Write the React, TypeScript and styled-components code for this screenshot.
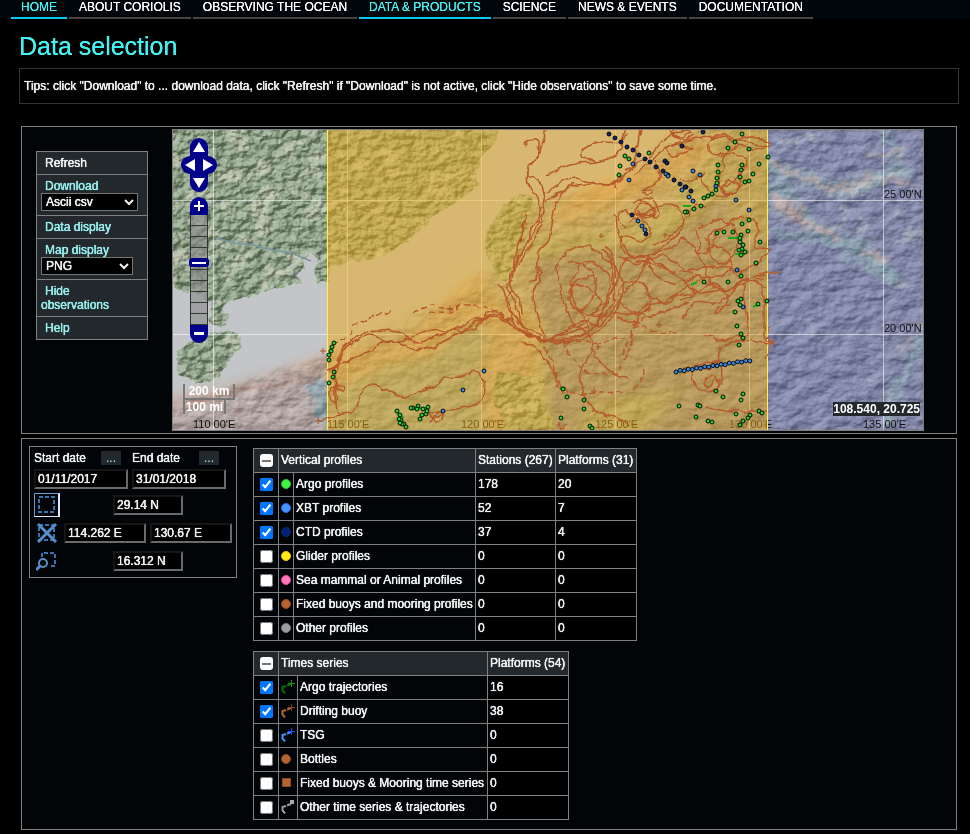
import React, { useEffect, useRef, useState } from "react";
import styled, { createGlobalStyle, css } from "styled-components";

const GlobalStyle = createGlobalStyle`
  * { box-sizing: border-box; }
  body {
    margin: 0;
    background: #000;
    color: #f0f0f0;
    font-family: "Liberation Sans", Arial, sans-serif;
    font-size: 12px;
    line-height: 14px;
  }
`;

const heavy = css`
  text-shadow: 0 0 0 currentColor, 0 0 1px currentColor;
`;

const Page = styled.div`
  padding-bottom: 4px;
`;

const Nav = styled.nav`
  display: flex;
  gap: 2px;
  height: 19px;
  padding-left: 11px;
  background: #01060a;
`;

const NavLink = styled.a<{ $active?: boolean }>`
  padding: 0 10px;
  border-bottom: 2px solid ${(p) => (p.$active ? "#00ccf5" : "#454545")};
  color: ${(p) => (p.$active ? "#41f4f4" : "#fff")};
  text-decoration: none;
  text-shadow: 0 0 0 currentColor;
  white-space: nowrap;
  line-height: 14px;
`;

const Title = styled.h1`
  margin: 12px 19px 6px;
  color: #41f4f4;
  font-size: 25px;
  font-weight: 400;
  line-height: 31px;
  text-shadow: 0 0 0 currentColor;
`;

const Tips = styled.p`
  ${heavy}
  margin: 0 11px 22px 19px;
  padding: 10px 4px;
  border: 1px solid #333;
  line-height: 14px;
`;

const Panel = styled.section`
  display: flex;
  align-items: flex-start;
  margin: 0 13px 4px 21px;
  border: 1px solid #808080;
  background: #010508;
`;

const MapPanel = styled(Panel)`
  gap: 24px;
  padding: 2px 32px 2px 14px;
`;

const DataPanel = styled(Panel)`
  gap: 16px;
  padding: 7px 7px 9px;
  margin-bottom: 0;
`;

const Menu = styled.ul`
  ${heavy}
  flex: 0 0 112px;
  margin: 22px 0 0;
  padding: 0;
  list-style: none;
  border: 1px solid #808080;
  background: #23282c;
`;

const MenuItem = styled.li`
  padding: 4px;
  & + & { border-top: 1px solid #808080; }
`;

const MenuLink = styled.a<{ $plain?: boolean }>`
  display: block;
  text-indent: 4px;
  text-decoration: none;
  color: ${(p) => (p.$plain ? "#f0f0f0" : "#98ecec")};
`;

const HideLink = styled(MenuLink)`
  width: 80px;
`;

const MenuSelect = styled.select<{ $wide?: boolean }>`
  ${heavy}
  display: block;
  width: ${(p) => (p.$wide ? 97 : 92)}px;
  height: 18px;
  padding: 0;
  border: 1px solid #767676;
  background: #000;
  color: #f0f0f0;
  font: 12px "Liberation Sans", Arial, sans-serif;
`;

const MapFrame = styled.div`
  position: relative;
  flex: 1;
  min-width: 0;
  height: 302px;
  border: 1px solid #808080;
  overflow: hidden;
`;

const Chart = styled.svg`
  display: block;
  width: 100%;
  height: 100%;
`;

const Blend = styled.rect`
  mix-blend-mode: hard-light;
`;

const Controls = styled.div`
  position: absolute;
  top: 8px;
  left: 8px;
  width: 36px;
  display: flex;
  flex-direction: column;
  align-items: center;
`;

const Pad = styled.div`
  display: grid;
  grid-template: 18px 18px 18px / 9px 9px 9px 9px;
  margin-bottom: 5px;
`;

const RoundButton = styled.button<{ $area?: string; $radius: string }>`
  grid-area: ${(p) => p.$area ?? "auto"};
  width: 18px;
  height: 18px;
  padding: 0;
  border: 0;
  border-radius: ${(p) => p.$radius};
  background: #00008b;
  svg { display: block; }
`;

const ZoomRail = styled.div`
  display: flex;
  justify-content: center;
  width: 18px;
  height: 110px;
  border: 1px solid #333;
  border-width: 0 1px;
  background: repeating-linear-gradient(#88888899 0 10px, #303a30 10px 11px);
`;

const ZoomSlider = styled.input`
  flex: 0 0 20px;
  appearance: none;
  writing-mode: vertical-lr;
  direction: rtl;
  width: 20px;
  height: 110px;
  margin: 0;
  background: none;
  &::-webkit-slider-thumb {
    appearance: none;
    width: 20px;
    height: 9px;
    border: 0;
    border-radius: 3px;
    background: linear-gradient(#fff, #fff) center / 14px 2px no-repeat #00008b;
  }
`;

const Scale = styled.div`
  position: absolute;
  left: 10px;
  bottom: 16px;
  color: #fff;
  font-weight: 700;
  text-align: center;
`;

const ScaleTop = styled.div`
  width: 52px;
  height: 16px;
  border: solid #777;
  border-width: 0 2px 2px;
`;

const ScaleBottom = styled.div`
  width: 43px;
  height: 14px;
  border: solid #777;
  border-width: 0 2px;
`;

const Readout = styled.output`
  position: absolute;
  right: 3px;
  bottom: 14px;
  background: #23282c;
  color: #fff;
  font-weight: 700;
`;

const Extent = styled.form`
  ${heavy}
  flex: 0 0 208px;
  display: grid;
  gap: 4px;
  padding: 4px;
  border: 1px solid #808080;
`;

const Dates = styled.div`
  display: grid;
  grid-template-columns: 94px 94px;
  gap: 4px;
`;

const DateHead = styled.div`
  display: flex;
  justify-content: space-between;
  padding-right: 7px;
`;

const DotsButton = styled.button`
  width: 20px;
  height: 14px;
  padding: 0;
  border: 0;
  background: #23282c;
  color: #98ecec;
  font: 12px/10px "Liberation Sans", Arial, sans-serif;
`;

const Field = styled.input`
  ${heavy}
  min-width: 0;
  width: 100%;
  height: 20px;
  padding: 0 2px;
  border: 2px solid;
  border-color: #161616 #6a6a6a #6a6a6a #161616;
  background: #000;
  color: #f0f0f0;
  font: 12px "Liberation Sans", Arial, sans-serif;
`;

const ExtentRow = styled.div<{ $single?: boolean }>`
  display: grid;
  grid-template-columns: 26px ${(p) => (p.$single ? "70px" : "82px 82px")};
  column-gap: ${(p) => (p.$single ? 53 : 4)}px;
  align-items: center;
  height: 24px;
`;

const ToolButton = styled.button<{ $on?: boolean }>`
  display: grid;
  place-items: center;
  width: 26px;
  height: 24px;
  padding: 0;
  border: 1px solid ${(p) => (p.$on ? "#6d9bd0" : "transparent")};
  ${(p) => p.$on && "border-right: 2px solid #dde8ff; border-bottom-color: #dde8ff;"}
  background: none;
`;

const Tables = styled.div`
  ${heavy}
  display: flex;
  flex-direction: column;
  align-items: flex-start;
  gap: 10px;
  padding-top: 2px;
`;

const Table = styled.table`
  border-collapse: collapse;
  line-height: 14px;
  text-align: left;
`;

const Cell = styled.td<{ $w?: number; $dark?: boolean }>`
  width: ${(p) => (p.$w ? p.$w + "px" : "auto")};
  height: 24px;
  padding: 0 1px 2px 2px;
  border: 1px solid #808080;
  background: ${(p) => (p.$dark ? "#000" : "transparent")};
  white-space: nowrap;
  svg { display: block; }
`;

const HeadRow = styled.tr`
  background: #23282c;
`;

const HeadCell = styled(Cell).attrs({ as: "th" })`
  font-weight: 400;
  background: transparent;
`;

const Tick = styled.input`
  display: block;
  width: 13px;
  height: 13px;
  margin: 2px auto 0;
`;

const MixedTick = styled(Tick)`
  appearance: none;
  border-radius: 3px;
  background: linear-gradient(#777, #777) center / 9px 2px no-repeat #fff;
`;

type Pt = [number, number];
const points = (s: string): Pt[] =>
  s.trim().split(/\s+/).map((p) => p.split(",").map(Number) as Pt);

const smooth = (s: string) => {
  const p = points(s);
  let d = `M${p[0][0]} ${p[0][1]}`;
  for (let i = 0; i < p.length - 1; i++) {
    const a = p[i - 1] ?? p[i];
    const b = p[i];
    const c = p[i + 1];
    const e = p[i + 2] ?? c;
    d += `C${b[0] + (c[0] - a[0]) / 6} ${b[1] + (c[1] - a[1]) / 6} ${c[0] - (e[0] - b[0]) / 6} ${c[1] - (e[1] - b[1]) / 6} ${c[0]} ${c[1]}`;
  }
  return d;
};

const LAND =
  "M172 129H498L493 145 480 158 475 175 478 185 467 195 450 205 430 218 423 228 403 242 390 252 370 260 350 260 330 268 327 280 318 282 314 270 320 262 312 252 306 256 303 268 296 276 302 282 290 285 275 288 262 292 248 296 232 301 224 305 222 310 228 316 226 325 216 327 209 322 211 306 206 297 196 292 185 292 172 284Z" +
  "M520 194L530 195 534 203 530 213 527 235 518 255 510 272 506 284 498 276 492 263 485 248 486 236 495 218 507 203Z" +
  "M233 332L241 335 240 346 232 357 220 374 208 382 198 383 187 377 178 375 177 352 187 345 200 337 213 333Z" +
  "M498 372L517 373 530 378 543 375 545 383 538 397 548 410 554 431H502L500 413 493 403 493 390Z";

const TRACKS = [
  "327,370 337,365 343,352 352,343 370,335 383,340 397,342 415,349 430,348 450,338 465,330 480,320 495,315 508,320 520,332 540,341",
  "338,415 335,395 337,368 341,352 355,338 376,331 392,330 408,338 418,343 435,336 462,327 472,320 500,318 522,332 545,342 570,343",
  "330,370 350,360 370,352 383,342 405,341 430,331 470,330 490,312 510,320",
  "318,421 338,415 355,409 362,390 370,386 385,389 403,397 420,391 430,388 445,378 460,377 475,371 484,383 483,398 475,405 455,409 440,415 430,422",
  "333,387 342,386 341,390 331,388 331,401 337,402 336,392 331,392",
  "432,420 438,412 444,418 436,422 430,414 440,412 444,420",
  "546,130 540,150 530,165 527,175 536,178 542,190 545,210 540,225 535,240 525,255 515,270 510,285 520,300 522,315",
  "525,144 532,139 539,142 536,157 528,168 527,183 536,193 540,212 533,235 518,258 514,272",
  "547,177 560,168 575,163 595,162 610,158 620,150 625,135 627,129",
  "595,162 581,155 585,147 600,143 620,143 628,134",
  "542,192 552,190 560,182 575,178 590,182 615,183 630,170 636,155 640,129",
  "540,211 550,198 565,190 573,183",
  "616,184 590,184 572,186 560,197 554,212 551,230 548,242 538,252 538,275 530,283",
  "513,282 515,267 521,255 529,240 532,225 544,215",
  "525,213 523,230 518,245 515,260 511,275 507,290 515,300 520,320 530,335 545,340",
  "500,284 504,296 511,310 513,321 528,335 547,340 570,338 593,330",
  "512,290 506,304 515,317 525,327 545,338",
  "540,265 540,280 533,297 538,315 545,335 565,341",
  "558,282 558,265 567,252 580,246 592,248 610,262 620,276 624,292 613,315 600,330 580,340 550,343",
  "570,283 580,267 593,263 610,278 606,300 599,320 580,329 552,338",
  "622,284 640,282 648,290 650,302 635,314 612,315 590,317",
  "602,249 610,257 613,278 614,300 601,320",
  "572,283 572,300 585,322 592,340 597,358 613,373 628,379",
  "559,283 564,301 573,322 592,337",
  "542,343 565,331 585,322 604,302 617,282 624,261 646,256 667,270",
  "545,342 566,341 591,330 606,304 615,282 612,255 605,245",
  "548,343 581,321 600,325 622,296 637,279 650,256",
  "593,347 580,377 585,397 597,412 617,418 630,428",
  "522,340 540,352 555,375 558,385 563,392",
  "615,213 617,228 629,253 645,258 655,275 675,285",
  "626,229 619,222 619,214 625,211 640,217 650,230 642,242 625,235 620,245 630,255 647,256 665,245 680,232 683,215 670,205 650,210 630,222",
  "640,200 649,204 653,213 645,218 635,211 641,204 653,207 654,213 640,216 638,209",
  "633,202 648,198 657,207 658,216 647,215 635,215",
  "626,175 618,180 616,189",
  "626,170 638,163 652,155 661,143 675,134 690,129",
  "634,174 648,165 663,150 680,143 697,138 718,135 739,140 767,147",
  "656,160 660,178 649,187 641,190",
  "640,191 653,190 648,195 641,192",
  "654,244 669,238 681,225 694,208 707,206",
  "690,150 674,155 666,150 677,145 693,150",
  "670,130 680,137 690,132 679,129 673,134 684,140 693,135",
  "717,134 709,144 712,153 725,153 737,145 725,138 710,137",
  "735,140 753,137 772,145 750,149 733,142",
  "719,157 733,153 747,160 745,170 733,182 721,189 731,194 743,184",
  "723,155 722,170 719,185 728,193 739,187 730,180 722,188",
  "680,178 690,181 705,173 702,184 713,193 723,196 739,187 738,169",
  "695,230 700,245 699,255 710,248 722,228 739,217 747,217",
  "698,229 708,223 720,219 734,228 736,250 723,264 711,255 709,237 723,227",
  "704,238 715,247 725,250 733,265 721,276 708,277 695,274",
  "680,271 705,268 728,267 740,278 760,276 778,271",
  "683,285 699,275 710,285 730,290 745,280 768,287",
  "680,300 697,293 712,284 728,290 744,280 764,284",
  "682,320 695,302 715,303 730,295 740,285 763,278",
  "682,281 700,293 722,290 728,303 716,313 717,308 730,306",
  "744,283 745,305 748,332 740,337 716,340 713,336 703,335",
  "763,284 763,305 764,337 773,342",
  "748,215 758,228 754,246 768,250 757,263 739,272",
  "721,348 730,343 746,340 761,343 774,344 766,341",
  "721,346 717,360 708,370 697,366 692,375 698,389 713,391 719,380 713,374 704,381 709,388 717,377",
  "712,361 720,361 721,382 711,391",
  "703,407 718,410 735,411 751,411 767,412",
  "681,370 698,365 718,361",
  "618,318 636,322 642,310 660,302 680,295 700,292",
  "642,284 655,298 670,302 684,288 700,280",
  "630,310 650,316 669,310 687,302",
  "620,258 640,263 660,256 676,264 693,274",
  "654,254 670,248 682,239 695,250 704,267 712,285",
  "623,283 619,293 628,310 640,315 652,305 646,292",
  "570,262 588,268 596,285 590,303 578,310 569,300 575,282 592,275",
  "568,292 578,285 594,292 601,304 591,315 576,310",
  "635,260 657,265 677,275 694,293",
  "560,423 561,430 567,425",
];

const DASHED = [
  "333,345 350,333 355,326 372,317 390,312",
  "413,313 430,306 450,309 465,305 485,307 500,313 512,320",
  "430,312 447,313 460,307",
  "563,343 577,363 587,373 600,373 617,373",
  "620,370 630,347 633,327 650,330 677,333",
  "623,355 634,330",
  "633,325 650,316 670,309 690,302",
  "645,368 643,377 630,390 597,393 573,393 558,380 551,358 543,347",
  "540,340 565,342 600,342 632,336",
  "768,327 769,350 766,357",
];

const GREEN =
  "625,156 629,159 620,166 619,175 649,153 742,134 735,142 728,148 749,149 768,157 759,164 742,165 741,170 740,177 753,174 749,181 745,182 718,165 718,172 717,178 717,183 716,190 712,194 708,196 704,198 701,206 694,209 687,212 685,212 749,220 742,224 748,231 733,232 717,233 724,232 741,235 740,242 742,249 745,252 741,255 740,238 743,245 739,250 760,242 756,263 741,276 704,282 728,282 741,299 738,301 740,305 735,312 758,304 767,301 737,326 741,334 743,338 739,345 334,343 332,347 331,351 329,355 329,360 334,372 333,377 329,383 698,405 700,406 716,391 723,397 743,394 741,400 696,417 708,421 712,422 759,411 762,413 750,415 748,418 743,421 740,425 563,389 567,397 584,400 584,409 561,418 590,426 592,428 679,406 397,411 400,415 401,420 404,424 406,427 399,419 402,424 413,408 418,406 423,409 428,407 422,415 420,419 426,414 411,408 417,409 427,411 400,423 736,414";
const BLUE =
  "633,164 629,180 642,226 645,230 638,221 682,190 693,171 700,175 689,197 716,186 736,200 749,210 737,270 743,307 484,371 463,390 443,411 666,174 668,176 693,201";
const NAVY =
  "609,134 615,138 621,142 627,147 633,150 639,155 645,159 650,162 656,167 663,171 668,175 674,180 680,184 686,187 665,161 667,163 682,146 703,132 632,215 646,234 691,191 685,187";

const shots = points(GREEN);
const blueDots = points(BLUE).concat(
  Array.from({ length: 19 }, (_, i) => [676 + i * 4.1, 372 - (i * 11) / 18 - (i % 2)] as Pt)
);
const navyDots = points(NAVY);

const Dots = ({ list, color }: { list: Pt[]; color: string }) => (
  <g fill={color} stroke="#050b05">
    {list.map(([x, y], i) => (
      <circle key={i} cx={x} cy={y} r="2" />
    ))}
  </g>
);

const Lighting = ({ id, freq, seed, depth, gain }: { id: string; freq: string; seed: number; depth: number; gain: number }) => (
  <filter id={id} x="0" y="0" width="100%" height="100%" colorInterpolationFilters="sRGB">
    <feTurbulence type="fractalNoise" baseFrequency={freq} numOctaves="4" seed={seed} />
    <feColorMatrix values="0 0 0 0 0 0 0 0 0 0 0 0 0 0 0 1 0 0 0 0" />
    <feDiffuseLighting surfaceScale={depth} diffuseConstant={gain} lightingColor="#fff">
      <feDistantLight azimuth="225" elevation="45" />
    </feDiffuseLighting>
  </filter>
);

const MapDrawing = () => (
  <Chart viewBox="173 130 750 300" preserveAspectRatio="xMidYMid slice" role="img" aria-label="Observation map">
    <defs>
      <Lighting id="relief" freq="0.1 0.13" seed={8} depth={6} gain={0.84} />
      <Lighting id="seabed" freq="0.05 0.08" seed={21} depth={4} gain={0.78} />
      <filter id="soft" x="-20%" y="-20%" width="140%" height="140%">
        <feGaussianBlur stdDeviation="6" />
      </filter>
      <filter id="ridge" x="-20%" y="-20%" width="140%" height="140%">
        <feTurbulence type="fractalNoise" baseFrequency="0.09" numOctaves="4" seed="3" result="n" />
        <feGaussianBlur in="SourceGraphic" stdDeviation="2" />
        <feDisplacementMap in2="n" scale="18" xChannelSelector="R" yChannelSelector="G" />
      </filter>
      <filter id="patches" x="0" y="0" width="100%" height="100%">
        <feTurbulence type="fractalNoise" baseFrequency="0.04 0.06" numOctaves="4" seed="15" />
        <feColorMatrix values="0 0 0 0 0.75 0 0 0 0 0.72 0 0 0 0 0.58 5 0 0 0 -2.5" />
      </filter>
      <filter id="coast" x="-5%" y="-5%" width="110%" height="110%">
        <feTurbulence type="fractalNoise" baseFrequency="0.13" numOctaves="3" seed="6" />
        <feDisplacementMap in="SourceGraphic" scale="9" xChannelSelector="R" yChannelSelector="G" />
      </filter>
      <filter id="drift" x="-5%" y="-5%" width="110%" height="110%">
        <feTurbulence type="fractalNoise" baseFrequency="0.1" numOctaves="2" seed="12" />
        <feDisplacementMap in="SourceGraphic" scale="7" xChannelSelector="R" yChannelSelector="G" />
      </filter>
      <clipPath id="land"><path d={LAND} /></clipPath>
      <mask id="deepArea" maskUnits="userSpaceOnUse" x="172" y="129" width="752" height="302">
        <path d="M150 410L260 378 335 355 450 300 500 262 530 200 620 190 690 120H950V450H150Z" fill="#fff" filter="url(#soft)" />
      </mask>
    </defs>

    <rect x="172" y="129" width="752" height="302" fill="#c3c5c8" />
    <g filter="url(#soft)">
      <path d="M165 400L240 385 300 364 340 350 400 342 445 300 480 272 500 300 545 320V440H165Z" fill="#dab49a" />
      <path d="M165 408L230 392 290 372 330 380V440H165Z" fill="#ccb4b0" />
      <path d="M330 440L338 388 390 364 432 356 470 322 492 332 482 362 486 440Z" fill="#92bab8" />
      <path d="M535 440L540 300 522 250 545 234 610 232 650 225 705 168 760 120H940V440Z" fill="#a2bca0" />
      <path d="M552 440L545 330 528 262 580 250 655 246 690 220 720 200 780 110H940V440Z" fill="#7a82b8" />
      <path d="M552 212L580 192 650 168 700 140 715 150 670 180 610 207 560 222Z" fill="#dca88a" />
      <path d="M715 129H768V240L735 235Z" fill="#98a69c" />
      <path d="M590 400L680 390 640 440H570Z" fill="#9bb0a0" />
    </g>
    <rect x="768" y="129" width="156" height="302" fill="#7b84be" />
    <g filter="url(#ridge)" fill="none" strokeLinecap="round">
      <g stroke="#86b2c6" strokeOpacity="0.85">
        <path d="M768 166L800 176 835 190 870 182 900 168" strokeWidth="14" />
        <path d="M775 190L790 200" strokeWidth="22" />
        <path d="M775 208L805 215 820 232 860 246 895 280" strokeWidth="13" />
        <path d="M773 232L820 238 865 264 890 278" strokeWidth="5" />
        <path d="M885 132L900 155 912 185M870 156L903 152" strokeWidth="6" />
        <path d="M926 325L918 345 906 375 895 390 888 425" strokeWidth="8" />
        <path d="M313 388L327 396 324 415" strokeWidth="16" />
      </g>
      <g stroke="#ccb0b0">
        <path d="M772 163L800 176 838 190 872 178" strokeWidth="5" />
        <path d="M780 203L797 216" strokeWidth="15" />
        <path d="M800 220L835 236M868 253L884 260" strokeWidth="6" />
        <path d="M870 157L902 152M885 178L915 186" strokeWidth="4" />
        <path d="M186 405L250 388 310 379" stroke="#cc9384" strokeWidth="4" />
        <path d="M916 324H922M907 343H913" strokeWidth="4" />
      </g>
      <path d="M780 143l35 -8M845 220l-10 8M862 220l4 8M895 215l5 2M846 195l35-18 20-6M903 232h20M899 242l14-6M860 228l2 6M873 236l-3 8M893 207l4 4M845 204l-4 6M890 282l4 2M898 285l3-2M806 318l4 8M815 332l4 2M868 378l3 2M900 345v10M885 395l6 8" stroke="#cfe2e4" strokeWidth="3" />
      <path d="M187 418l18-8M205 424l22-12M240 400l20-6M235 420l16-12M262 418l12-10M285 400l8 10M300 385l6 25M270 425l20-6" stroke="#e8d6d4" strokeWidth="3" />
    </g>
    <g mask="url(#deepArea)">
      <Blend x="172" y="129" width="752" height="302" filter="url(#seabed)" opacity="0.45" />
    </g>
    <path d={LAND} fill="#8dab84" filter="url(#coast)" />
    <g clipPath="url(#land)">
      <rect x="172" y="129" width="752" height="302" filter="url(#patches)" opacity="0.45" />
      <Blend x="172" y="129" width="752" height="302" filter="url(#relief)" opacity="0.42" />
    </g>
    <path d="M215 238l20 5 18 2 20 5 18 3 20 8" fill="none" stroke="#7899a0" strokeWidth="1.5" />

    <path d="M213.5 129V431M347.5 129V431M481.5 129V431M615.5 129V431M749.5 129V431M883.5 129V431M172 200.5H924M172 334.5H924" stroke="#fff" strokeOpacity="0.55" />
    <g fill="#111" fontFamily="Liberation Sans, Arial, sans-serif" fontSize="11">
      <text x="193" y="428">110 00'E</text>
      <text x="327" y="428">115 00'E</text>
      <text x="461" y="428">120 00'E</text>
      <text x="595" y="428">125 00'E</text>
      <text x="729" y="428">130 00'E</text>
      <text x="863" y="428">135 00'E</text>
      <text x="884" y="198">25 00'N</text>
      <text x="884" y="332">20 00'N</text>
    </g>
    <rect x="327" y="129" width="441" height="302" fill="#eeac18" fillOpacity="0.5" />
    <path d="M327.5 129V431M767.5 129V431" stroke="#fff04a" />

    <g filter="url(#drift)" fill="none" stroke="#b55a2b" strokeWidth="1.5">
      {TRACKS.map((t) => <path key={t} d={smooth(t)} />)}
      {DASHED.map((t) => <path key={t} d={smooth(t)} strokeDasharray="6 3" />)}
    </g>
    <path d="M523 144h5m-2-2v5M320 351h6m-3-3v6M315 421h6m-3-3v6M447 309h6m-3-3v6M656 325h6m-3-3v6M596 347h5m-3-3v6M591 391h6m-3-3v6M599 236h5m-3-3v5M663 235h5m-3-2v5M519 240h5m-3-3v5" stroke="#a2552a" fill="none" />
    <path d="M728 238h10M735 254h10M683 206h8M753 307l6-3M691 285l6-3M396 412l8 6M414 408h14M560 388h6" stroke="#18a818" strokeWidth="2" />
    <Dots list={navyDots} color="#0b237c" />
    <Dots list={blueDots} color="#3a88f0" />
    <Dots list={shots} color="#2bd030" />
  </Chart>
);

const Glyph = ({ d }: { d: string }) => (
  <svg width="18" height="18" viewBox="0 0 18 18" aria-hidden="true"><path d={d} fill="#fff" /></svg>
);

const MapControls = () => (
  <Controls>
    <Pad>
      <RoundButton $area="1 / 2 / 2 / 4" $radius="9px 9px 0 0" aria-label="Pan up"><Glyph d="M9 4l6 10H3z" /></RoundButton>
      <RoundButton $area="2 / 1 / 3 / 3" $radius="9px 0 0 9px" aria-label="Pan left"><Glyph d="M4 9l10-6v12z" /></RoundButton>
      <RoundButton $area="2 / 3 / 3 / 5" $radius="0 9px 9px 0" aria-label="Pan right"><Glyph d="M14 9L4 3v12z" /></RoundButton>
      <RoundButton $area="3 / 2 / 4 / 4" $radius="0 0 9px 9px" aria-label="Pan down"><Glyph d="M9 14l6-10H3z" /></RoundButton>
    </Pad>
    <RoundButton $radius="9px 9px 0 0" aria-label="Zoom in"><Glyph d="M8 4h2v4h4v2h-4v4H8v-4H4V8h4z" /></RoundButton>
    <ZoomRail>
      <ZoomSlider type="range" min={0} max={100} defaultValue={57} aria-label="Zoom level" />
    </ZoomRail>
    <RoundButton $radius="0 0 9px 9px" aria-label="Zoom out"><Glyph d="M4 7h10v3H4z" /></RoundButton>
  </Controls>
);

const DashedBox = ({ kind }: { kind: "draw" | "clear" | "zoom" }) => (
  <svg width="22" height="22" viewBox="0 0 22 22" fill="none" aria-hidden="true">
    {kind === "zoom" ? (
      <>
        <path d="M6 7V3H19V16H13" stroke="#3a74ad" strokeWidth="2" strokeDasharray="4 2" />
        <circle cx="7" cy="13" r="4" stroke="#5590cc" strokeWidth="2" />
        <path d="M4 16L0 20" stroke="#5590cc" strokeWidth="3" />
      </>
    ) : (
      <path d="M3 3H18V18H3Z" stroke="#3a74ad" strokeWidth="2" strokeDasharray="4 2" />
    )}
    {kind === "clear" && <path d="M2 2L20 20M20 2L2 20" stroke="#5590cc" strokeWidth="3" />}
  </svg>
);

const Disc = ({ fill, edge }: { fill: string; edge: string }) => (
  <svg width="10" height="10" viewBox="0 0 10 10" aria-hidden="true">
    <circle cx="5" cy="5" r="4.5" fill={fill} stroke={edge} />
  </svg>
);

const Track = ({ color, mark, square }: { color: string; mark: string; square?: boolean }) => (
  <svg width="14" height="14" viewBox="0 0 14 14" fill="none" aria-hidden="true">
    <path d="M4 13.5L1.500 10.5V7L5 6M6 5.500L10 4" stroke={color} strokeWidth="2" />
    {square ? <path d="M9 0h4v4H9z" fill={mark} /> : <path d="M7 3.500H14M10.500 0V7" stroke={mark} />}
  </svg>
);

type Row = { name: string; icon: React.ReactNode; values: number[]; on?: boolean };

const profiles: Row[] = [
  { name: "Argo profiles", icon: <Disc fill="#42f542" edge="#27c52b" />, values: [178, 20], on: true },
  { name: "XBT profiles", icon: <Disc fill="#4495ff" edge="#2467e8" />, values: [52, 7], on: true },
  { name: "CTD profiles", icon: <Disc fill="#00207c" edge="#0b2a5e" />, values: [37, 4], on: true },
  { name: "Glider profiles", icon: <Disc fill="#ffe81c" edge="#e6c900" />, values: [0, 0] },
  { name: "Sea mammal or Animal profiles", icon: <Disc fill="#ff78bc" edge="#f048a0" />, values: [0, 0] },
  { name: "Fixed buoys and mooring profiles", icon: <Disc fill="#b8622f" edge="#8a4a22" />, values: [0, 0] },
  { name: "Other profiles", icon: <Disc fill="#9c9c9c" edge="#7c7c7c" />, values: [0, 0] },
];

const series: Row[] = [
  { name: "Argo trajectories", icon: <Track color="#087008" mark="#109810" />, values: [16], on: true },
  { name: "Drifting buoy", icon: <Track color="#b8622f" mark="#7c4020" />, values: [38], on: true },
  { name: "TSG", icon: <Track color="#4495ff" mark="#1548ff" />, values: [0] },
  { name: "Bottles", icon: <Disc fill="#b8622f" edge="#8a4a22" />, values: [0] },
  {
    name: "Fixed buoys & Mooring time series",
    icon: <svg width="10" height="9" viewBox="0 0 10 9" aria-hidden="true"><path d="M1.500 0.500h8v8h-8z" fill="#b8622f" stroke="#8a4a22" /></svg>,
    values: [0],
  },
  { name: "Other time series & trajectories", icon: <Track color="#9c9c9c" mark="#aaa" square />, values: [0] },
];

const AllTick = ({ label }: { label: string }) => {
  const ref = useRef<HTMLInputElement>(null);
  useEffect(() => {
    if (ref.current) ref.current.indeterminate = true;
  }, []);
  return <MixedTick ref={ref} type="checkbox" aria-label={label} />;
};

type DataTableProps = { title: string; heads: string[]; rows: Row[]; iconWidth: number; nameWidth: number };

const DataTable = ({ title, heads, rows, iconWidth, nameWidth }: DataTableProps) => {
  const [on, setOn] = useState(rows.map((r) => !!r.on));
  return (
    <Table>
      <thead>
        <HeadRow>
          <HeadCell $w={25}><AllTick label={`All ${title}`} /></HeadCell>
          <HeadCell colSpan={2}>{title}</HeadCell>
          {heads.map((h) => <HeadCell key={h} $w={h.startsWith("Platforms") ? 81 : 80}>{h}</HeadCell>)}
        </HeadRow>
      </thead>
      <tbody>
        {rows.map((r, i) => (
          <tr key={r.name}>
            <Cell>
              <Tick
                type="checkbox"
                id={`${title}-${i}`}
                checked={on[i]}
                onChange={() => setOn(on.map((v, j) => (j === i ? !v : v)))}
              />
            </Cell>
            <Cell $w={iconWidth}>{r.icon}</Cell>
            <Cell $w={nameWidth}><label htmlFor={`${title}-${i}`}>{r.name}</label></Cell>
            {r.values.map((v, j) => <Cell key={j} $dark>{v}</Cell>)}
          </tr>
        ))}
      </tbody>
    </Table>
  );
};

const links = ["HOME", "ABOUT CORIOLIS", "OBSERVING THE OCEAN", "DATA & PRODUCTS", "SCIENCE", "NEWS & EVENTS", "DOCUMENTATION"];

export default function App() {
  return (
    <Page>
      <GlobalStyle />
      <Nav>
        {links.map((l) => (
          <NavLink key={l} href="#" $active={l === "HOME" || l === "DATA & PRODUCTS"}>{l}</NavLink>
        ))}
      </Nav>
      <Title>Data selection</Title>
      <Tips>
        Tips: click "Download" to ... download data, click "Refresh" if "Download" is not active, click "Hide observations" to save some time.
      </Tips>

      <MapPanel>
        <Menu>
          <MenuItem><MenuLink href="#" $plain>Refresh</MenuLink></MenuItem>
          <MenuItem>
            <MenuLink href="#">Download</MenuLink>
            <MenuSelect $wide aria-label="Download format"><option>Ascii csv</option></MenuSelect>
          </MenuItem>
          <MenuItem><MenuLink href="#">Data display</MenuLink></MenuItem>
          <MenuItem>
            <MenuLink href="#">Map display</MenuLink>
            <MenuSelect aria-label="Map format"><option>PNG</option></MenuSelect>
          </MenuItem>
          <MenuItem><HideLink href="#">Hide observations</HideLink></MenuItem>
          <MenuItem><MenuLink href="#">Help</MenuLink></MenuItem>
        </Menu>
        <MapFrame>
          <MapDrawing />
          <MapControls />
          <Scale>
            <ScaleTop>200 km</ScaleTop>
            <ScaleBottom>100 mi</ScaleBottom>
          </Scale>
          <Readout>108.540, 20.725</Readout>
        </MapFrame>
      </MapPanel>

      <DataPanel>
        <Extent>
          <Dates>
            <DateHead><label htmlFor="start">Start date</label><DotsButton type="button" aria-label="Pick start date">...</DotsButton></DateHead>
            <DateHead><label htmlFor="end">End date</label><DotsButton type="button" aria-label="Pick end date">...</DotsButton></DateHead>
            <Field id="start" defaultValue="01/11/2017" />
            <Field id="end" defaultValue="31/01/2018" />
          </Dates>
          <ExtentRow $single>
            <ToolButton type="button" $on aria-label="Draw area"><DashedBox kind="draw" /></ToolButton>
            <Field aria-label="North limit" defaultValue="29.14 N" />
          </ExtentRow>
          <ExtentRow>
            <ToolButton type="button" aria-label="Clear area"><DashedBox kind="clear" /></ToolButton>
            <Field aria-label="West limit" defaultValue="114.262 E" />
            <Field aria-label="East limit" defaultValue="130.67 E" />
          </ExtentRow>
          <ExtentRow $single>
            <ToolButton type="button" aria-label="Zoom to area"><DashedBox kind="zoom" /></ToolButton>
            <Field aria-label="South limit" defaultValue="16.312 N" />
          </ExtentRow>
        </Extent>
        <Tables>
          <DataTable title="Vertical profiles" heads={["Stations (267)", "Platforms (31)"]} rows={profiles} iconWidth={15} nameWidth={182} />
          <DataTable title="Times series" heads={["Platforms (54)"]} rows={series} iconWidth={19} nameWidth={190} />
        </Tables>
      </DataPanel>
    </Page>
  );
}
